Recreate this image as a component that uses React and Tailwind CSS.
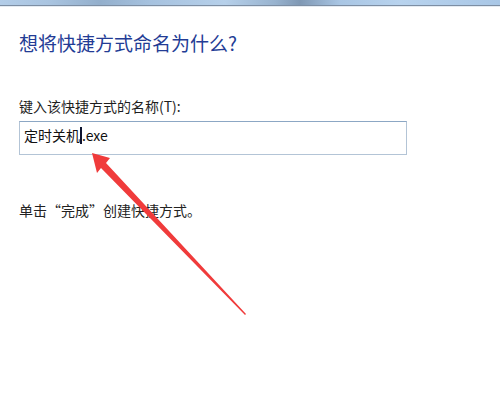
export default function App() {
  return (
    <div className="relative w-[500px] h-[403px] bg-white overflow-hidden" style={{ fontFamily: '"Noto Sans CJK SC", "Noto Sans", sans-serif' }}>
      <div className="h-[5px] bg-[linear-gradient(90deg,#b3cde8_0%,#a9c4e0_10%,#93afcc_20%,#a6c2df_30%,#b6d0ea_45%,#98b3cf_55%,#7f98b4_60%,#a9c6e4_68%,#b8d3ee_80%,#a9c7e6_100%)]" />
      <div className="h-[1px] bg-[#7d8ea3]" />
      <div className="h-[1px] bg-[#e4ebf2]" />
      <div className="px-[19px]">
        <div className="mt-[23px] text-[19px] leading-[26px] text-[#233c95] tracking-[0px]">想将快捷方式命名为什么?</div>
        <div className="mt-[40px] text-[14px] leading-[20px] text-[#1e1e1e]">键入该快捷方式的名称(T):</div>
        <div className="mt-[5px] w-[388px] h-[34px] border border-[#b3c4d6] border-t-[#8ca7c4] pl-[4px] pt-[3px] flex items-start">
          <span className="text-[14px] leading-[20px] text-[#111]">定时关机</span>
          <span className="w-[2px] h-[17px] bg-[#0e1430] mt-[2px]" />
          <span className="text-[14px] leading-[20px] text-[#111]">.exe</span>
        </div>
        <div className="mt-[45px] text-[14px] leading-[20px] text-[#222]">单击“完成”创建快捷方式。</div>
      </div>
      <svg className="absolute left-0 top-0" width="500" height="403" viewBox="0 0 500 403">
        <polygon points="92,153 110,158 106,163 246,314 245,315 101,168 97,173" fill="#f03b3b" />
      </svg>
    </div>
  );
}
